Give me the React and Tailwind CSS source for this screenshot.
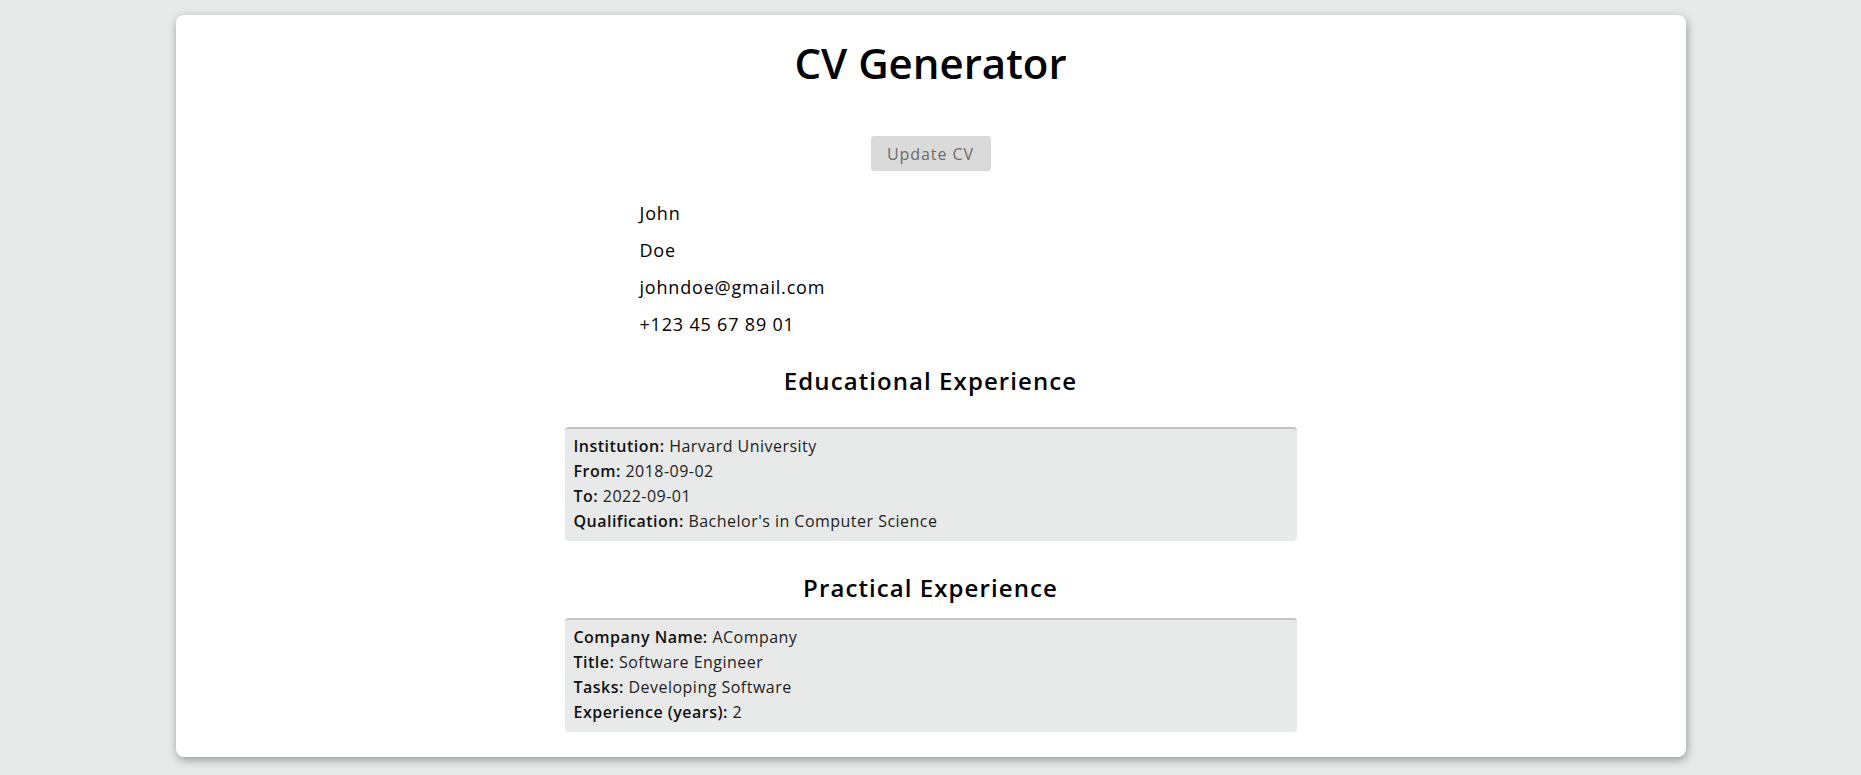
const personal = ['John', 'Doe', 'johndoe@gmail.com', '+123 45 67 89 01']

const education = [
  ['Institution', 'Harvard University'],
  ['From', '2018-09-02'],
  ['To', '2022-09-01'],
  ['Qualification', "Bachelor's in Computer Science"],
]

const practical = [
  ['Company Name', 'ACompany'],
  ['Title', 'Software Engineer'],
  ['Tasks', 'Developing Software'],
  ['Experience (years)', '2'],
]

function InfoBox({ rows }) {
  return (
    <div className="w-[732px] rounded-[4px] border-t-2 border-[#c4c4c4] bg-[#e8eaea] px-[9px] pt-[5px] pb-[7px]">
      {rows.map(([label, value]) => (
        <div key={label} className="text-[16px] leading-[25px] tracking-[0.03em] text-[#222]">
          <span className="font-semibold text-[#111]">{label}:</span> {value}
        </div>
      ))}
    </div>
  )
}

export default function App() {
  return (
    <div
      className="min-h-screen bg-[#e8e9e9] pt-[15px] pb-[21px]"
      style={{ fontFamily: '"Open Sans", "DejaVu Sans", sans-serif' }}
    >
      <div className="mx-auto flex w-[1510px] flex-col items-center rounded-lg bg-white pt-[18px] pb-[25px] shadow-[1px_3px_10px_rgba(0,0,0,0.35)]">
        <h1 className="text-[42px] font-semibold leading-[60px] text-black">CV Generator</h1>

        <button className="mt-[43px] h-[35px] w-[120px] rounded-[3px] bg-[#dadada] text-[16px] tracking-[0.06em] text-[#6b6b6b]">
          Update CV
        </button>

        {/* personal */}
        <div className="mt-[24px] w-[732px] pl-[75px]">
          {personal.map((line) => (
            <div key={line} className="text-[18px] leading-[37px] tracking-[0.045em] text-black">
              {line}
            </div>
          ))}
        </div>

        <h2 className="mt-[20px] text-[24px] font-semibold leading-[36px] tracking-[0.045em] text-black">
          Educational Experience
        </h2>
        <div className="mt-[28px]">
          <InfoBox rows={education} />
        </div>

        <h2 className="mt-[29px] text-[24px] font-semibold leading-[36px] tracking-[0.045em] text-black">
          Practical Experience
        </h2>
        <div className="mt-[12px]">
          <InfoBox rows={practical} />
        </div>
      </div>
    </div>
  )
}
